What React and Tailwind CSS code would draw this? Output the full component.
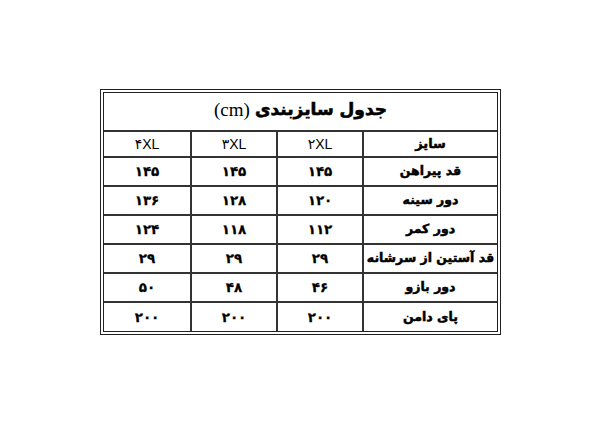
const rows = [
  ["قد پیراهن", "۱۴۵", "۱۴۵", "۱۴۵"],
  ["دور سینه", "۱۲۰", "۱۲۸", "۱۳۶"],
  ["دور کمر", "۱۱۲", "۱۱۸", "۱۲۴"],
  ["قد آستین از سرشانه", "۲۹", "۲۹", "۲۹"],
  ["دور بازو", "۴۶", "۴۸", "۵۰"],
  ["پای دامن", "۲۰۰", "۲۰۰", "۲۰۰"],
];

const fa = { fontFamily: '"DejaVu Sans", "Noto Sans", sans-serif' };

const Cell = ({ children, last, className = "" }) => (
  <div
    className={
      "flex items-center justify-center " +
      (last ? "" : "border-l-2 border-[#333] ") +
      className
    }
  >
    {children}
  </div>
);

export default function App() {
  return (
    <div className="w-[600px] h-[424px] bg-white pt-[89px] pl-[100px]">
      <div
        dir="rtl"
        className="w-[401px] border-[4px] border-double border-[#222] text-black"
        style={fa}
      >
        <div className="h-[39px] border-b-2 border-[#333] flex items-center justify-center pb-[3px]">
          <span className="text-[17px] font-bold [-webkit-text-stroke:0.6px_black]">
            جدول سایزبندی
          </span>
          <span
            className="text-[19px] mr-[5px]"
            style={{ fontFamily: '"Liberation Serif", serif' }}
          >
            (cm)
          </span>
        </div>

        <div className="grid grid-cols-[135px_86px_86px_86px] h-[26px] border-b-2 border-[#333]">
          <Cell className="text-[13px] font-bold [-webkit-text-stroke:0.5px_black]">سایز</Cell>
          {["۲XL", "۳XL", "۴XL"].map((h, i) => (
            <Cell key={h} last={i === 2}>
              <span
                dir="ltr"
                className="text-[14px]"
                style={{ fontFamily: '"Liberation Sans", "DejaVu Sans", sans-serif' }}
              >
                {h}
              </span>
            </Cell>
          ))}
        </div>

        {rows.map((r, ri) => (
          <div
            key={r[0]}
            className={
              "grid grid-cols-[135px_86px_86px_86px] " +
              (ri === rows.length - 1 ? "h-[28px]" : "h-[29px] border-b-2 border-[#333]")
            }
          >
            {r.map((c, ci) => (
              <Cell
                key={ci}
                last={ci === 3}
                className={
                  ci === 0
                    ? "text-[12.5px] font-bold [-webkit-text-stroke:0.5px_black]"
                    : "text-[13.5px] font-bold [-webkit-text-stroke:0.25px_black]"
                }
              >
                {c}
              </Cell>
            ))}
          </div>
        ))}
      </div>
    </div>
  );
}
